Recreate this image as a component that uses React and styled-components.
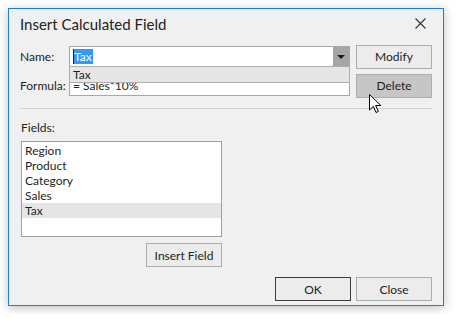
import { createGlobalStyle, styled } from "styled-components";

const GlobalStyle = createGlobalStyle`
  html, body {
    margin: 0;
    padding: 0;
    background: #ffffff;
  }
  body {
    font-family: "Lato", "Liberation Sans", sans-serif;
    font-size: 12px;
    color: #1e1e1e;
  }
`;

const Page = styled.div`
  padding: 8px;
`;

const Window = styled.div`
  position: relative;
  width: 434px;
  height: 296px;
  border: 1px solid #1c7fd6;
  background: #f0f0f0;
  box-shadow: 0 2px 10px rgba(0, 0, 0, 0.25);
  display: flex;
  flex-direction: column;
`;

const TitleBar = styled.div`
  height: 29px;
  padding: 0 11px;
  display: flex;
  align-items: center;
  justify-content: space-between;
`;

const Title = styled.span`
  font-size: 15px;
  color: #222;
`;

const CloseX = styled.svg`
  width: 11px;
  height: 11px;
  margin-right: 6px;
`;

const Body = styled.div`
  padding: 7px 11px 0 11px;
  display: flex;
  flex-direction: column;
`;

const FormRow = styled.div`
  display: flex;
  align-items: center;
  height: 23px;
  margin-top: ${(p) => p.$gap || 0}px;
`;

const Label = styled.span`
  width: 49px;
  flex-shrink: 0;
  line-height: 16px;
`;

const Combo = styled.div`
  position: relative;
  width: 281px;
  height: 21px;
  box-sizing: border-box;
  border: 1px solid #a8a8a8;
  background: #fff;
  display: flex;
  align-items: center;
  margin-right: 6px;
`;

const ComboText = styled.div`
  flex: 1;
  padding-left: 3px;
  display: flex;
  align-items: center;
`;

const Selected = styled.span`
  background: #3399ff;
  color: #fff;
  line-height: 15px;
  padding: 0 1px 0 0;
  border-left: 1px solid #222;
`;

const DropButton = styled.div`
  width: 16px;
  align-self: stretch;
  background: #a6a6a6;
  display: flex;
  align-items: center;
  justify-content: center;
`;

const Triangle = styled.div`
  width: 0;
  height: 0;
  border-left: 4px solid transparent;
  border-right: 4px solid transparent;
  border-top: 4px solid #1a1a1a;
`;

const DropList = styled.div`
  position: absolute;
  left: -1px;
  right: -1px;
  top: 19px;
  height: 17px;
  box-sizing: border-box;
  border: 1px solid #adadad;
  background: #e6e6e6;
  padding-left: 3px;
  line-height: 15px;
  z-index: 2;
`;

const TextInput = styled.div`
  width: 281px;
  height: 21px;
  box-sizing: border-box;
  border: 1px solid #a8a8a8;
  background: #fff;
  padding-left: 3px;
  line-height: 19px;
  overflow: hidden;
  margin-right: 6px;
`;

const Button = styled.div`
  width: 76px;
  height: 24px;
  flex-shrink: 0;
  box-sizing: border-box;
  border: 1px solid ${(p) => (p.$default ? "#3c3c3c" : "#adadad")};
  background: ${(p) => (p.$hover ? "#c6c6c6" : "#ececec")};
  display: flex;
  align-items: center;
  justify-content: center;
  color: #222;
`;

const Separator = styled.div`
  height: 1px;
  background: #d2d2d2;
  margin-top: 11px;
`;

const FieldsLabel = styled.span`
  margin: 11px 0 5px 1px;
  line-height: 16px;
`;

const FieldsArea = styled.div`
  width: 201px;
  margin-left: 1px;
  display: flex;
  flex-direction: column;
  align-items: flex-end;
  gap: 6px;
`;

const ListBox = styled.div`
  width: 100%;
  height: 96px;
  box-sizing: border-box;
  border: 1px solid #a0a0a0;
  background: #fff;
  padding-top: 1px;
`;

const ListItem = styled.div`
  height: 15px;
  line-height: 15px;
  padding-left: 3px;
  background: ${(p) => (p.$active ? "#e5e5e5" : "transparent")};
`;

const Footer = styled.div`
  display: flex;
  justify-content: flex-end;
  gap: 5px;
  margin-top: 10px;
`;

const Cursor = styled.svg`
  position: absolute;
  left: 360px;
  top: 85px;
  width: 13px;
  height: 20px;
`;

const fields = ["Region", "Product", "Category", "Sales", "Tax"];

export default function App() {
  return (
    <Page>
      <GlobalStyle />
      <Window>
        <TitleBar>
          <Title>Insert Calculated Field</Title>
          <CloseX viewBox="0 0 11 11">
            <path d="M0.5 0.5 L10.5 10.5 M10.5 0.5 L0.5 10.5" stroke="#333" strokeWidth="1.1" />
          </CloseX>
        </TitleBar>
        <Body>
          <FormRow>
            <Label>Name:</Label>
            <Combo>
              <ComboText>
                <Selected>Tax</Selected>
              </ComboText>
              <DropButton>
                <Triangle />
              </DropButton>
              <DropList>Tax</DropList>
            </Combo>
            <Button>Modify</Button>
          </FormRow>
          <FormRow $gap={6}>
            <Label>Formula:</Label>
            <TextInput>= Sales*10%</TextInput>
            <Button $hover>Delete</Button>
          </FormRow>
          <Separator />
          <FieldsLabel>Fields:</FieldsLabel>
          <FieldsArea>
            <ListBox>
              {fields.map((f) => (
                <ListItem key={f} $active={f === "Tax"}>
                  {f}
                </ListItem>
              ))}
            </ListBox>
            <Button>Insert Field</Button>
          </FieldsArea>
          <Footer>
            <Button $default>OK</Button>
            <Button>Close</Button>
          </Footer>
        </Body>
        <Cursor viewBox="0 0 13 20">
          <path
            d="M0.5 0.5 L0.5 16 L4.3 12.3 L7 18.5 L9.3 17.5 L6.7 11.5 L11.8 11.5 Z"
            fill="#fff"
            stroke="#000"
            strokeWidth="1"
            strokeLinejoin="miter"
          />
        </Cursor>
      </Window>
    </Page>
  );
}
